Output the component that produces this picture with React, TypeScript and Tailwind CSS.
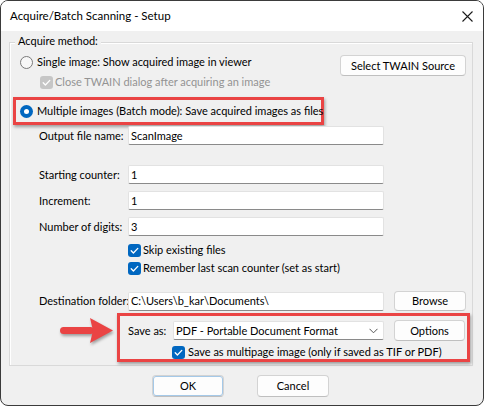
import React from 'react';

function Radio({ checked }: { checked?: boolean }) {
  if (checked) {
    return (
      <span className="w-[13px] h-[13px] shrink-0 rounded-full bg-[#0067c0] flex items-center justify-center">
        <span className="w-[5px] h-[5px] rounded-full bg-white" />
      </span>
    );
  }
  return <span className="w-[13px] h-[13px] shrink-0 rounded-full border border-[#7a7a7a] bg-[#f7f7f7]" />;
}

function Check({ disabled }: { disabled?: boolean }) {
  return (
    <span
      className={
        disabled
          ? 'w-[13px] h-[13px] shrink-0 rounded-[3px] bg-[#c6c6c6] flex items-center justify-center'
          : 'w-[13px] h-[13px] shrink-0 rounded-[3px] bg-[#0067c0] flex items-center justify-center'
      }
    >
      <svg width="13" height="13" viewBox="0 0 13 13">
        <polyline points="3.2,6.8 5.4,9 9.8,4.4" fill="none" stroke="#fff" strokeWidth="1.3" strokeLinecap="round" strokeLinejoin="round" />
      </svg>
    </span>
  );
}

function TextBox({ value }: { value: string }) {
  return (
    <div className="w-[256px] h-[19px] shrink-0 bg-white border border-[#e2e2e2] border-b-[#8a8a8a] rounded-[2px] flex items-center pl-[2px] whitespace-nowrap">
      {value}
    </div>
  );
}

function Btn({ children, className }: { children: React.ReactNode; className: string }) {
  return (
    <div
      className={`shrink-0 bg-[#fdfdfd] border border-[#d3d3d3] border-b-[#bfbfbf] rounded-[4px] flex items-center justify-center whitespace-nowrap ${className}`}
    >
      {children}
    </div>
  );
}

function Label({ children }: { children: React.ReactNode }) {
  return <span className="w-[89px] shrink-0 whitespace-nowrap">{children}</span>;
}

export default function App() {
  return (
    <div className="w-[484px] h-[406px] bg-white font-['Lato',sans-serif] text-[11px] leading-[16px] text-black">
      <div className="w-full h-full rounded-[8px] border border-[#3b3b3b] overflow-hidden flex flex-col bg-[#f0f0f0]">
        {/* Title bar */}
        <div className="h-[30px] shrink-0 bg-white flex items-center justify-between pl-[9px] pr-[10px]">
          <span className="text-[11.5px]">Acquire/Batch Scanning - Setup</span>
          <svg width="11" height="11" viewBox="0 0 11 11">
            <path d="M0.5 0.5 L10.5 10.5 M10.5 0.5 L0.5 10.5" stroke="#1b1b1b" strokeWidth="1.1" />
          </svg>
        </div>

        <div className="flex-1 flex flex-col px-[8px]">
          {/* Acquire method group */}
          <div className="relative mt-[11px] h-[324px] w-[464px] border border-[#d9d9d9] shadow-[inset_1px_1px_0_#ffffff] flex flex-col">
            <span className="absolute left-[5px] -top-[10px] px-[3px] bg-[#f0f0f0]">Acquire method:</span>

            <div className="mt-[11px] h-[20px] flex items-start justify-between pl-[10px] pr-[6px]">
              <div className="h-[16px] flex items-center gap-[4px]">
                <Radio />
                <span>Single image: Show acquired image in viewer</span>
              </div>
              <Btn className="mt-[1px] w-[126px] h-[21px]">Select TWAIN Source</Btn>
            </div>

            <div className="h-[16px] flex items-center gap-[2px] pl-[30px] text-[#939393]">
              <Check disabled />
              <span>Close TWAIN dialog after acquiring an image</span>
            </div>

            <div className="mt-[7px] ml-[3px] w-[311px] h-[28px] border-[3px] border-[#ea4444] shadow-[1px_2px_3px_rgba(0,0,0,0.35)] flex items-center gap-[4px] pl-[4px]">
              <Radio checked />
              <span className="whitespace-nowrap">Multiple images (Batch mode): Save acquired images as files</span>
            </div>

            <div className="mt-[1px] h-[19px] flex items-center pl-[29px]">
              <Label>Output file name:</Label>
              <TextBox value="ScanImage" />
            </div>

            <div className="mt-[20px] h-[19px] flex items-center pl-[29px]">
              <Label>Starting counter:</Label>
              <TextBox value="1" />
            </div>
            <div className="mt-[7px] h-[19px] flex items-center pl-[29px]">
              <Label>Increment:</Label>
              <TextBox value="1" />
            </div>
            <div className="mt-[7px] h-[19px] flex items-center pl-[29px]">
              <Label>Number of digits:</Label>
              <TextBox value="3" />
            </div>

            <div className="mt-[6px] h-[16px] flex items-center gap-[2px] pl-[118px]">
              <Check />
              <span>Skip existing files</span>
            </div>
            <div className="mt-[2px] h-[16px] flex items-center gap-[2px] pl-[118px]">
              <Check />
              <span>Remember last scan counter (set as start)</span>
            </div>

            <div className="mt-[15px] h-[20px] flex items-center pl-[29px]">
              <Label>Destination folder:</Label>
              <TextBox value="C:\Users\b_kar\Documents\" />
              <Btn className="ml-[10px] w-[72px] h-[20px]">Browse</Btn>
            </div>

            <div className="mt-[2px] flex items-start">
              <svg width="62" height="49" viewBox="0 0 62 49" className="ml-[45px] drop-shadow-[1px_2px_1.5px_rgba(0,0,0,0.35)]">
                <rect x="5" y="14" width="34" height="7" rx="3.5" fill="#ea4444" />
                <path d="M35 5 L58 17.5 L35 30 L38 17.5 Z" fill="#ea4444" />
              </svg>
              <div className="w-[353px] h-[49px] border-[3px] border-[#ea4444] shadow-[1px_2px_3px_rgba(0,0,0,0.35)] flex flex-col pt-[4px]">
                <div className="h-[21px] flex items-center pl-[8px]">
                  <span className="w-[45px] shrink-0">Save as:</span>
                  <div className="w-[211px] h-[19px] shrink-0 bg-white border border-[#e2e2e2] border-b-[#8a8a8a] rounded-[2px] flex items-center justify-between pl-[2px] pr-[5px]">
                    <span className="whitespace-nowrap">PDF - Portable Document Format</span>
                    <svg width="9" height="6" viewBox="0 0 9 6">
                      <polyline points="0.5,0.8 4.5,4.8 8.5,0.8" fill="none" stroke="#555" strokeWidth="1" />
                    </svg>
                  </div>
                  <Btn className="ml-[10px] w-[71px] h-[21px]">Options</Btn>
                </div>
                <div className="mt-[3px] h-[16px] flex items-center gap-[3px] pl-[52px]">
                  <Check />
                  <span className="whitespace-nowrap">Save as multipage image (only if saved as TIF or PDF)</span>
                </div>
              </div>
            </div>
          </div>

          {/* Dialog buttons */}
          <div className="mt-[9px] flex justify-center gap-[33px] pr-[3px]">
            <Btn className="w-[72px] h-[22px] border-[#0067c0] border-b-[#0067c0] shadow-[inset_0_0_0_1px_rgba(0,103,192,0.35)]">OK</Btn>
            <Btn className="w-[72px] h-[22px]">Cancel</Btn>
          </div>
        </div>
      </div>
    </div>
  );
}
